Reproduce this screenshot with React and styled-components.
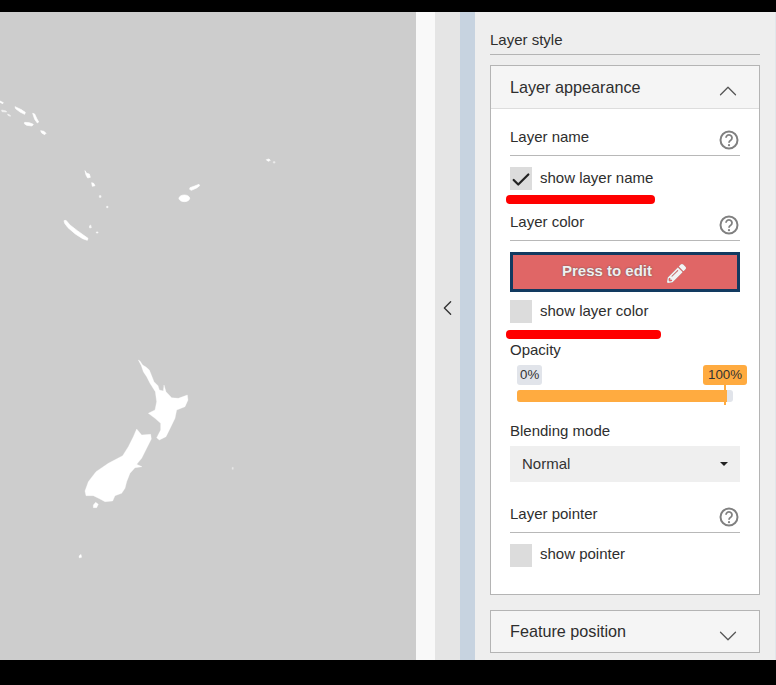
import React from "react";
import styled, { createGlobalStyle } from "styled-components";
import { ChevronLeft, ChevronUp, ChevronDown, Check } from "lucide-react";
import { FaPencilAlt } from "react-icons/fa";

const Global = createGlobalStyle`
  html, body { margin: 0; padding: 0; background: #000; }
  body { font-family: "Liberation Sans", Arial, sans-serif; color: #2e2e2e; }
  * { box-sizing: border-box; }
`;

const Page = styled.div`
  width: 776px;
  height: 685px;
  background: #000;
  padding: 12px 0 25px;
  overflow: hidden;
`;
const Main = styled.div`
  height: 648px;
  display: flex;
`;
const MapArea = styled.div`
  width: 416px;
  flex: none;
  background: #cdcdcd;
  overflow: hidden;
`;
const MapSvg = styled.svg`
  display: block;
  width: 416px;
  height: 648px;
  filter: blur(0.35px);
`;
const Gutter = styled.div`
  width: 19px;
  flex: none;
  background: #f9f9f9;
`;
const Toggle = styled.div`
  width: 25px;
  flex: none;
  background: #e5e5e5;
  display: flex;
  align-items: center;
  justify-content: center;
  padding-bottom: 56px;
  color: #333;
`;
const Rail = styled.div`
  width: 15px;
  flex: none;
  background: #c7d3e0;
`;
const Panel = styled.div`
  width: 301px;
  flex: none;
  background: #eeeeee;
  padding: 15px 15px 0;
  border-right: 1px solid #e2e6ea;
  overflow: hidden;
`;
const PanelTitle = styled.div`
  font-size: 15px;
  line-height: 26px;
  height: 28px;
  border-bottom: 1px solid #b4b4b4;
`;
const Card = styled.div`
  border: 1px solid #b4b4b4;
  background: #fff;
  margin-top: ${(p) => p.$top}px;
`;
const CardHeader = styled.div`
  height: ${(p) => p.$h}px;
  background: #f5f5f5;
  display: flex;
  align-items: center;
  justify-content: space-between;
  padding: 0 16px 0 19px;
  font-size: 16.2px;
  border-bottom: ${(p) => (p.$open ? "1px solid #dddddd" : "none")};
  svg { margin-top: ${(p) => (p.$open ? 8 : 8)}px; color: #555; }
`;
const CardBody = styled.div`
  padding: 18px 19px 0;
  height: 485px;
`;
const SectionHead = styled.div`
  height: 29px;
  display: flex;
  justify-content: space-between;
  border-bottom: 1px solid #b8b8b8;
  font-size: 15px;
  line-height: 20px;
  padding-right: 1px;
  margin-top: ${(p) => p.$top || 0}px;
`;
const Help = styled.svg`
  width: 20px;
  height: 20px;
  margin-top: 2.5px;
  color: #808080;
`;
const CheckRow = styled.div`
  display: flex;
  align-items: flex-start;
  gap: 8px;
  margin-top: ${(p) => p.$top}px;
  font-size: 15px;
  line-height: ${(p) => p.$lh || 22}px;
`;
const Box = styled.div`
  width: 22px;
  height: 23px;
  flex: none;
  background: #dcdcdc;
  display: flex;
  align-items: center;
  justify-content: center;
  color: #222;
  svg { margin-top: 3px; }
`;
const Redaction = styled.div`
  width: ${(p) => p.$w}px;
  height: 9px;
  background: #ff0000;
  border-radius: 4px;
  margin: ${(p) => p.$top}px 0 0 -4px;
`;
const EditButton = styled.button`
  display: flex;
  align-items: center;
  justify-content: center;
  gap: 15px;
  width: 100%;
  height: 40px;
  margin-top: 11px;
  background: #e06666;
  border: 3px solid #123a60;
  color: #f0f0f0;
  font: bold 15px "Liberation Sans", Arial, sans-serif;
  padding: 0 2px 4px 0;
  text-shadow: 0 0 2px #555;
  svg {
    margin-top: 6px;
    filter: drop-shadow(0 0 0.5px #777);
  }
`;
const FieldLabel = styled.div`
  font-size: 15px;
  line-height: 20px;
  margin-top: ${(p) => p.$top}px;
`;
const Slider = styled.div`
  margin: 5px -7px 0 7px;
`;
const SliderLabels = styled.div`
  display: flex;
  justify-content: space-between;
`;
const Tag = styled.div`
  height: 20px;
  padding: 0 ${(p) => (p.$on ? 5 : 3)}px;
  border-radius: 3px;
  background: ${(p) => (p.$on ? "#ffab40" : "#e1e4ea")};
  font-size: 13.3px;
  line-height: 20px;
  color: #333;
`;
const Track = styled.div`
  position: relative;
  height: 12px;
  width: 216px;
  margin-top: 5px;
  border-radius: 3px;
  background: #e1e4ea;
`;
const Fill = styled.div`
  height: 12px;
  border-radius: 3px 0 0 3px;
  background: #ffab40;
`;
const Handle = styled.div`
  position: absolute;
  left: 207px;
  top: -5px;
  width: 2px;
  height: 20px;
  background: #ffab40;
`;
const Select = styled.div`
  height: 36px;
  margin-top: 5px;
  background: #efefef;
  display: flex;
  align-items: center;
  justify-content: space-between;
  padding: 0 12px 2px;
  font-size: 15px;
  color: #333;
`;
const Caret = styled.div`
  width: 0;
  height: 0;
  margin-top: 2px;
  border-left: 4px solid transparent;
  border-right: 4px solid transparent;
  border-top: 4px solid #222;
`;

const HelpIcon = () => (
  <Help viewBox="0 0 20 20" fill="none" stroke="currentColor">
    <circle cx="10" cy="10" r="8.5" strokeWidth="2" />
    <path d="M7 7.8a3 3 0 1 1 4.7 2.5c-1.1.7-1.7 1.3-1.7 2.5" strokeWidth="1.8" />
    <circle cx="10" cy="15.2" r="1.1" fill="currentColor" stroke="none" />
  </Help>
);

const Land = () => (
  <MapSvg viewBox="0 0 416 648" fill="#fff" stroke="#fff" strokeLinejoin="round">
    <g transform="translate(0 78) scale(.33333)" strokeWidth="2">
      <path d="M0 33 10 38 8 41 0 37Z" />
      <path d="M45 50 62 58 76 67 74 73 60 66 47 56Z" />
      <path d="M5 60 18 63 20 66 6 65ZM23 72 31 76 31 79 24 76Z" opacity=".75" />
      <path d="M98 70 104 72 110 85 116 96 112 99 104 88Z" />
      <path d="M74 97 88 98 100 103 96 108 80 106 73 101Z" />
      <path d="M122 122 132 124 138 130 134 134 125 129Z" />
      <path d="M255 242 260 250 268 252 271 262 263 264 258 255Z" />
      <path d="M275 278 281 280 285 287 277 289Z" />
      <path d="M298 317h5v5h-5ZM320 349h4v4h-4ZM268 408l4-3 2 8-5 1ZM289 426h5v3h-5Z" opacity=".85" />
      <path d="M192 392 198 391 210 405 232 422 250 435 264 445 262 451 248 446 226 432 204 413 194 400Z" />
      <ellipse cx="553" cy="325" rx="16" ry="10" />
      <path d="M570 293 584 288 597 283 599 287 590 294 574 301 569 298Z" />
      <path d="M799 209 807 207 811 211 804 214Z" />
      <path d="M820 215h5v4h-5Z" opacity=".6" />
    </g>
    <g transform="translate(130 343) scale(.33333)" strokeWidth="1">
      <path d="M25 15 30 18 38 30 48 36 58 45 65 62 72 80 84 92 88 105 100 108 102 90 108 110 125 128 145 130 172 120 174 135 165 155 140 165 135 190 118 225 108 245 88 255 80 248 92 225 92 205 75 190 55 175 75 165 80 140 76 110 60 85 50 65 40 50 34 32Z" />
    </g>
    <g transform="translate(80 413) scale(.33333)" strokeWidth="1">
      <path d="M170 12 185 30 212 28 214 42 200 70 185 100 170 118 186 125 165 128 150 145 140 170 135 190 125 205 105 212 98 228 75 230 60 222 40 212 18 212 15 198 25 170 48 140 85 115 128 92 145 65 160 35Z" />
      <path d="M40 240 47 232 55 238 50 248 40 248Z" />
    </g>
    <g transform="translate(60 338) scale(.33333)" strokeWidth="1">
      <path d="M57 618 63 613 65 622 58 624Z" />
      <path d="M516 352h4v6h-4Z" opacity=".5" />
    </g>
  </MapSvg>
);

export default function App() {
  return (
    <Page>
      <Global />
      <Main>
        <MapArea>
          <Land />
        </MapArea>
        <Gutter />
        <Toggle>
          <ChevronLeft size={36} strokeWidth={1.3} />
        </Toggle>
        <Rail />
        <Panel>
          <PanelTitle>Layer style</PanelTitle>
          <Card $top={10}>
            <CardHeader $h={43} $open>
              Layer appearance
              <ChevronUp size={30} strokeWidth={1} />
            </CardHeader>
            <CardBody>
              <SectionHead>
                Layer name
                <HelpIcon />
              </SectionHead>
              <CheckRow $top={11}>
                <Box>
                  <Check size={24} strokeWidth={2.4} />
                </Box>
                show layer name
              </CheckRow>
              <Redaction $w={149} $top={5} />
              <SectionHead $top={8}>
                Layer color
                <HelpIcon />
              </SectionHead>
              <EditButton>
                Press to edit
                <FaPencilAlt size={19} color="#f3f3f3" />
              </EditButton>
              <CheckRow $top={8}>
                <Box />
                show layer color
              </CheckRow>
              <Redaction $w={155} $top={7} />
              <FieldLabel $top={1}>Opacity</FieldLabel>
              <Slider>
                <SliderLabels>
                  <Tag>0%</Tag>
                  <Tag $on>100%</Tag>
                </SliderLabels>
                <Track>
                  <Fill style={{ width: "97%" }} />
                  <Handle />
                </Track>
              </Slider>
              <FieldLabel $top={19}>Blending mode</FieldLabel>
              <Select>
                Normal
                <Caret />
              </Select>
              <SectionHead $top={22}>
                Layer pointer
                <HelpIcon />
              </SectionHead>
              <CheckRow $top={11} $lh={20}>
                <Box />
                show pointer
              </CheckRow>
            </CardBody>
          </Card>
          <Card $top={15}>
            <CardHeader $h={41}>
              Feature position
              <ChevronDown size={30} strokeWidth={1} />
            </CardHeader>
          </Card>
        </Panel>
      </Main>
    </Page>
  );
}
